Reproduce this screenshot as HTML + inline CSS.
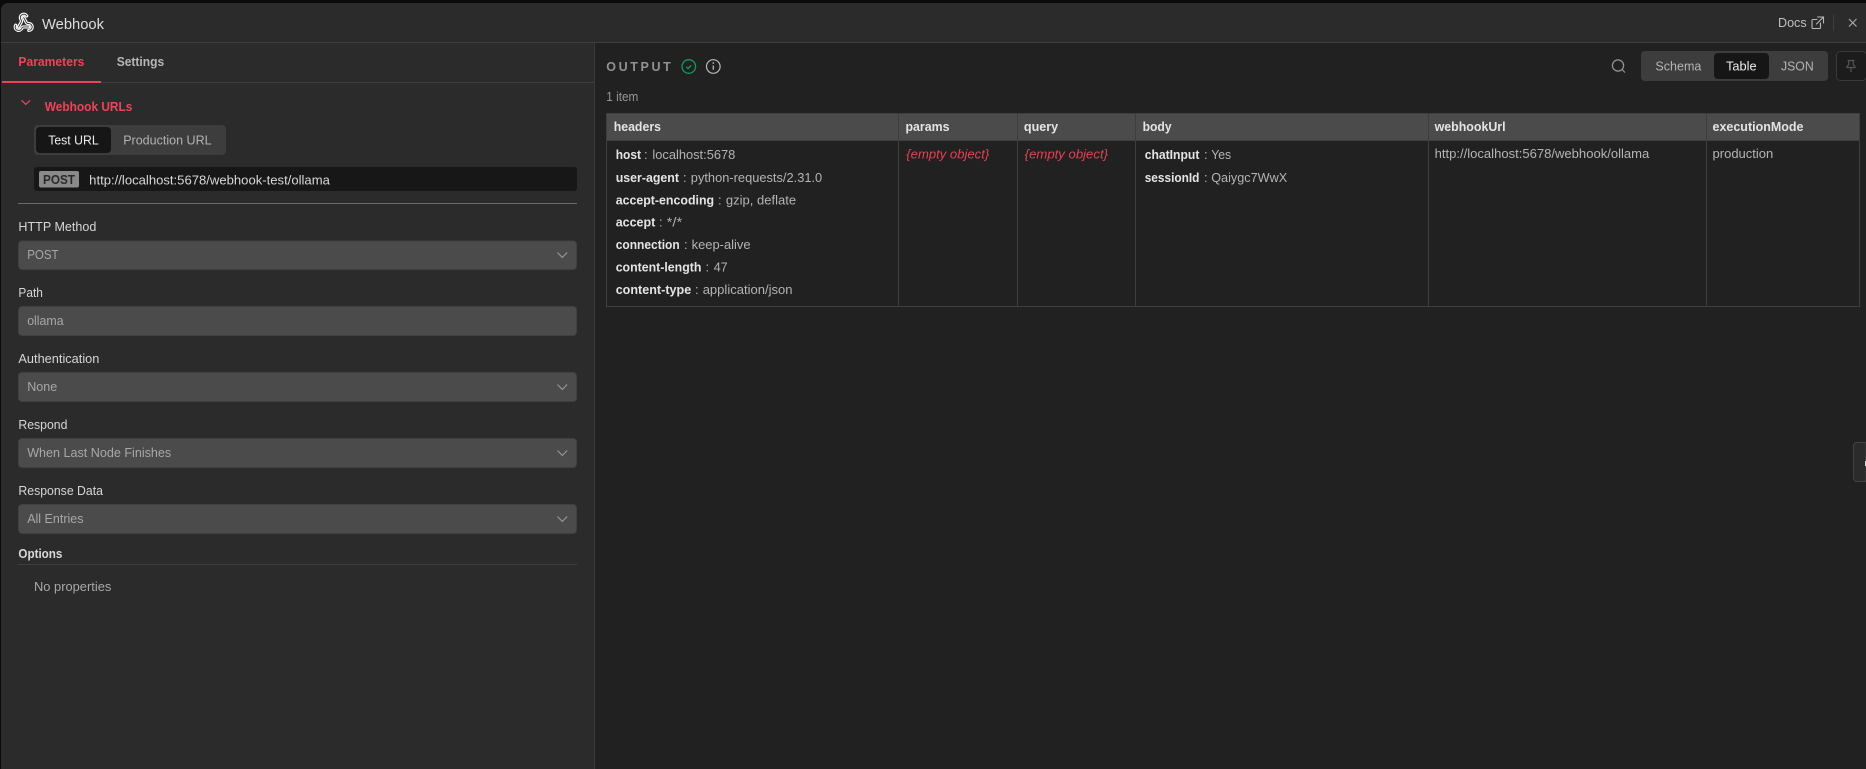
<!DOCTYPE html>
<html lang="en">
<head>
<meta charset="utf-8">
<title>Webhook</title>
<style>
html,body{margin:0;padding:0;width:1866px;height:769px;overflow:hidden;background:#0a0a0a}
svg{display:block;position:absolute;left:0;top:0}
text{font-family:"Liberation Sans",Arial,sans-serif;font-size:13px;fill:#d0d0d0}
.b{font-weight:700;fill:#e4e4e4}
.lab{fill:#d6d6d6}
.val{fill:#a8a8a8}
.cv{fill:#b4b4b4}
.red{fill:#ee4358}
.sel{fill:#4b4b4b;stroke:#404040;stroke-width:1}
.chev{fill:none;stroke:#9a9a9a;stroke-width:1.1}
</style>
</head>
<body>
<svg width="1866" height="769" viewBox="0 0 1866 769" xmlns="http://www.w3.org/2000/svg">
  <!-- panels -->
  <path d="M1 769V10a7 7 0 0 1 7-7H1866V769Z" fill="#2b2b2b"/>
  <rect x="594" y="42" width="1272" height="727" fill="#212121"/>
  <rect x="1" y="42" width="1865" height="1" fill="#3e3e3e"/>
  <rect x="594" y="42" width="1" height="727" fill="#3a3a3a"/>
  <rect x="2" y="82" width="592" height="1" fill="#3e3e3e"/>
  <rect x="2" y="81" width="99" height="2" fill="#e8455a"/>

  <!-- header -->
  <g fill="none" stroke-linecap="round" stroke-linejoin="round" transform="translate(13.5 12.5) scale(.85)">
    <g stroke="#ffffff" stroke-width="3.8">
      <path d="M18 16.98h-5.99c-1.1 0-1.95.94-2.48 1.9A4 4 0 0 1 2 17c.01-.7.2-1.4.57-2"/>
      <path d="m6 17 3.13-5.78c.53-.97.1-2.18-.5-3.1a4 4 0 1 1 6.89-4.06"/>
      <path d="m12 6 3.13 5.73C15.66 12.7 16.82 13 18 13a4 4 0 0 1 0 8"/>
    </g>
    <g stroke="#333333" stroke-width="1.1">
      <path d="M18 16.98h-5.99c-1.1 0-1.95.94-2.48 1.9A4 4 0 0 1 2 17c.01-.7.2-1.4.57-2"/>
      <path d="m6 17 3.13-5.78c.53-.97.1-2.18-.5-3.1a4 4 0 1 1 6.89-4.06"/>
      <path d="m12 6 3.13 5.73C15.66 12.7 16.82 13 18 13a4 4 0 0 1 0 8"/>
    </g>
  </g>
  <text x="42" y="29" style="font-size:15px;fill:#dedede" textLength="62" lengthAdjust="spacingAndGlyphs">Webhook</text>

  <text x="1778" y="27" style="fill:#c0c0c0" textLength="28.6" lengthAdjust="spacingAndGlyphs">Docs</text>
  <g fill="none" stroke="#b8b8b8" stroke-width="1.1" stroke-linecap="round">
    <path d="M1820.5 23v4.5a1 1 0 0 1-1 1h-6.5a1 1 0 0 1-1-1v-7a1 1 0 0 1 1-1h4"/>
    <path d="M1817.5 17h6v6M1823.5 17l-7 7"/>
  </g>
  <rect x="1833" y="15" width="1" height="16" fill="#3e3e3e"/>
  <path d="M1849 19l7.5 7.5M1856.5 19l-7.5 7.5" stroke="#a8a8a8" stroke-width="1.2" fill="none"/>

  <!-- tabs -->
  <text x="18.4" y="66" class="b" style="fill:#ee4358" textLength="66" lengthAdjust="spacingAndGlyphs">Parameters</text>
  <text x="116.7" y="66" class="b" style="fill:#b6b6b6" textLength="47.5" lengthAdjust="spacingAndGlyphs">Settings</text>

  <!-- webhook urls -->
  <path d="M21.5 100.3l4.3 4 4.3-4" fill="none" stroke="#ee4358" stroke-width="1.3"/>
  <text x="44.8" y="111" class="b" style="fill:#ee4358" textLength="87.6" lengthAdjust="spacingAndGlyphs">Webhook URLs</text>

  <rect x="34" y="125" width="192" height="30" rx="4" fill="#3d3d3d"/>
  <rect x="36" y="127" width="75" height="26" rx="4" fill="#161616"/>
  <text x="48.2" y="144.5" style="fill:#ececec" textLength="50.5" lengthAdjust="spacingAndGlyphs">Test URL</text>
  <text x="123.2" y="144.5" style="fill:#b2b2b2" textLength="88.4" lengthAdjust="spacingAndGlyphs">Production URL</text>

  <rect x="34" y="167" width="543" height="24" rx="3" fill="#171717"/>
  <rect x="39" y="171" width="40" height="16.5" rx="2" fill="#8a8a8a"/>
  <text x="43" y="184" class="b" style="fill:#2a2a2a" textLength="32" lengthAdjust="spacingAndGlyphs">POST</text>
  <text x="89.2" y="184.7" style="fill:#d8d8d8" textLength="240.7" lengthAdjust="spacingAndGlyphs">http://localhost:5678/webhook-test/ollama</text>

  <rect x="18" y="203" width="559" height="1" fill="#6a6a6a"/>

  <!-- form -->
  <text x="18.4" y="231" class="lab" textLength="78" lengthAdjust="spacingAndGlyphs">HTTP Method</text>
  <rect class="sel" x="18.5" y="241" width="558" height="28.5" rx="3.5"/>
  <text x="27.2" y="259" class="val" textLength="31.4" lengthAdjust="spacingAndGlyphs">POST</text>
  <path class="chev" d="M557.5 252.5l4.8 5 4.8-5"/>

  <text x="18.4" y="297" class="lab" textLength="24.5" lengthAdjust="spacingAndGlyphs">Path</text>
  <rect class="sel" x="18.5" y="306.5" width="558" height="29" rx="3.5"/>
  <text x="27.2" y="325" class="val" textLength="36.4" lengthAdjust="spacingAndGlyphs">ollama</text>

  <text x="18.4" y="363" class="lab" textLength="81" lengthAdjust="spacingAndGlyphs">Authentication</text>
  <rect class="sel" x="18.5" y="372.5" width="558" height="29" rx="3.5"/>
  <text x="27.2" y="391" class="val" textLength="30" lengthAdjust="spacingAndGlyphs">None</text>
  <path class="chev" d="M557.5 384.5l4.8 5 4.8-5"/>

  <text x="18.4" y="429" class="lab" textLength="49" lengthAdjust="spacingAndGlyphs">Respond</text>
  <rect class="sel" x="18.5" y="438.5" width="558" height="29" rx="3.5"/>
  <text x="27.2" y="457" class="val" textLength="144" lengthAdjust="spacingAndGlyphs">When Last Node Finishes</text>
  <path class="chev" d="M557.5 450.5l4.8 5 4.8-5"/>

  <text x="18.4" y="495" class="lab" textLength="84.6" lengthAdjust="spacingAndGlyphs">Response Data</text>
  <rect class="sel" x="18.5" y="504.5" width="558" height="29" rx="3.5"/>
  <text x="27.2" y="523" class="val" textLength="56.3" lengthAdjust="spacingAndGlyphs">All Entries</text>
  <path class="chev" d="M557.5 516.5l4.8 5 4.8-5"/>

  <text x="18.4" y="558" style="fill:#d8d8d8;font-weight:700" textLength="44" lengthAdjust="spacingAndGlyphs">Options</text>
  <rect x="18" y="564" width="559" height="1" fill="#3e3e3e"/>
  <text x="34" y="591" style="fill:#a8a8a8" textLength="77.3" lengthAdjust="spacingAndGlyphs">No properties</text>

  <!-- output header -->
  <text x="606.3" y="71" style="fill:#929292;font-weight:700;font-size:12.5px" textLength="64.5">OUTPUT</text>
  <circle cx="688.8" cy="66.5" r="6.8" fill="none" stroke="#149a59" stroke-width="1.3"/>
  <path d="M686.3 66.8l1.8 1.8 3-3.1" fill="none" stroke="#149a59" stroke-width="1.3"/>
  <circle cx="713.3" cy="66.5" r="6.8" fill="none" stroke="#b8b8b8" stroke-width="1.2"/>
  <path d="M713.3 65.5v4.2" stroke="#b8b8b8" stroke-width="1.3"/>
  <circle cx="713.3" cy="63" r=".9" fill="#b8b8b8"/>
  <text x="606.3" y="101" style="fill:#989898" textLength="32" lengthAdjust="spacingAndGlyphs">1 item</text>

  <!-- search / switch / pin -->
  <circle cx="1618" cy="65.5" r="5.6" fill="none" stroke="#969696" stroke-width="1.2"/>
  <path d="M1622 69.5l3 3" stroke="#969696" stroke-width="1.2"/>
  <rect x="1641" y="51" width="187" height="30" rx="4" fill="#3d3d3d"/>
  <rect x="1714" y="53" width="55" height="26" rx="4" fill="#161616"/>
  <text x="1655.4" y="70.5" style="fill:#b4b4b4" textLength="46" lengthAdjust="spacingAndGlyphs">Schema</text>
  <text x="1726" y="70.5" style="fill:#ececec" textLength="30.6" lengthAdjust="spacingAndGlyphs">Table</text>
  <text x="1781" y="70.5" style="fill:#b4b4b4" textLength="32.7" lengthAdjust="spacingAndGlyphs">JSON</text>
  <rect x="1836.5" y="51.5" width="30" height="29" rx="4" fill="#1c1c1c" stroke="#3a3a3a"/>
  <g fill="none" stroke="#555555" stroke-width="1.2">
    <path d="M1847.5 60.5h7M1848.8 60.5v4l-1.8 2v1h8v-1l-1.800-2v-4M1851 67.500v4.500"/>
  </g>

  <!-- table -->
  <rect x="606" y="113" width="1254" height="28" fill="#4b4b4b"/>
  <g fill="none" stroke="#3e3e3e" stroke-width="1">
    <rect x="606.5" y="113.5" width="1253" height="193"/>
    <path d="M606.5 140.5H1859.5M898.5 113.5V306.5M1017.5 113.5V306.5M1135.5 113.5V306.5M1428.5 113.5V306.5M1706.5 113.5V306.5"/>
  </g>
  <text x="613.7" y="131" class="b" textLength="47.3" lengthAdjust="spacingAndGlyphs">headers</text>
  <text x="905.5" y="131" class="b" textLength="44" lengthAdjust="spacingAndGlyphs">params</text>
  <text x="1023.9" y="131" class="b" textLength="34.3" lengthAdjust="spacingAndGlyphs">query</text>
  <text x="1142.6" y="131" class="b" textLength="29" lengthAdjust="spacingAndGlyphs">body</text>
  <text x="1434.6" y="131" class="b" textLength="71" lengthAdjust="spacingAndGlyphs">webhookUrl</text>
  <text x="1712.5" y="131" class="b" textLength="91" lengthAdjust="spacingAndGlyphs">executionMode</text>

  <text x="615.7" y="159" class="b" textLength="25.3" lengthAdjust="spacingAndGlyphs">host</text>
  <text x="644" y="159" class="cv">:</text>
  <text x="652.4" y="159" class="cv" textLength="82.9" lengthAdjust="spacingAndGlyphs">localhost:5678</text>

  <text x="615.7" y="182" class="b" textLength="63.3" lengthAdjust="spacingAndGlyphs">user-agent</text>
  <text x="683" y="182" class="cv">:</text>
  <text x="690.8" y="182" class="cv" textLength="131.4" lengthAdjust="spacingAndGlyphs">python-requests/2.31.0</text>

  <text x="615.7" y="204.5" class="b" textLength="98.4" lengthAdjust="spacingAndGlyphs">accept-encoding</text>
  <text x="718" y="204.5" class="cv">:</text>
  <text x="725.9" y="204.5" class="cv" textLength="70.2" lengthAdjust="spacingAndGlyphs">gzip, deflate</text>

  <text x="615.7" y="226.5" class="b" textLength="39.6" lengthAdjust="spacingAndGlyphs">accept</text>
  <text x="659" y="226.5" class="cv">:</text>
  <text x="666.7" y="226.5" class="cv" textLength="15.5" lengthAdjust="spacingAndGlyphs">*/*</text>

  <text x="615.7" y="249" class="b" textLength="64" lengthAdjust="spacingAndGlyphs">connection</text>
  <text x="684" y="249" class="cv">:</text>
  <text x="691.6" y="249" class="cv" textLength="59" lengthAdjust="spacingAndGlyphs">keep-alive</text>

  <text x="615.7" y="271.5" class="b" textLength="85.7" lengthAdjust="spacingAndGlyphs">content-length</text>
  <text x="705.5" y="271.5" class="cv">:</text>
  <text x="713.7" y="271.5" class="cv" textLength="13.9" lengthAdjust="spacingAndGlyphs">47</text>

  <text x="615.7" y="294" class="b" textLength="75.5" lengthAdjust="spacingAndGlyphs">content-type</text>
  <text x="695" y="294" class="cv">:</text>
  <text x="702.7" y="294" class="cv" textLength="89.8" lengthAdjust="spacingAndGlyphs">application/json</text>

  <text x="906.3" y="158.5" style="fill:#e64055;font-style:italic" textLength="82.9" lengthAdjust="spacingAndGlyphs">{empty object}</text>
  <text x="1024.7" y="158.5" style="fill:#e64055;font-style:italic" textLength="83.3" lengthAdjust="spacingAndGlyphs">{empty object}</text>

  <text x="1144.7" y="159" class="b" textLength="54.7" lengthAdjust="spacingAndGlyphs">chatInput</text>
  <text x="1204" y="159" class="cv">:</text>
  <text x="1211.2" y="159" class="cv" textLength="20" lengthAdjust="spacingAndGlyphs">Yes</text>
  <text x="1144.7" y="182" class="b" textLength="54.7" lengthAdjust="spacingAndGlyphs">sessionId</text>
  <text x="1204" y="182" class="cv">:</text>
  <text x="1211.2" y="182" class="cv" textLength="76" lengthAdjust="spacingAndGlyphs">Qaiygc7WwX</text>

  <text x="1434.6" y="158" class="cv" textLength="214.7" lengthAdjust="spacingAndGlyphs">http://localhost:5678/webhook/ollama</text>
  <text x="1712.5" y="158" class="cv" textLength="60.8" lengthAdjust="spacingAndGlyphs">production</text>

  <!-- side handle -->
  <path d="M1866 442.5h-9a3.5 3.5 0 0 0-3.5 3.5v32a3.5 3.5 0 0 0 3.5 3.5h9Z" fill="#2b2b2b" stroke="#414141"/>
  <rect x="1865" y="461" width="1" height="5" fill="#d8d8d8"/>

  <!-- top black strip -->
  <rect x="0" y="0" width="1866" height="3" fill="#0a0a0a"/>
</svg>
</body>
</html>
